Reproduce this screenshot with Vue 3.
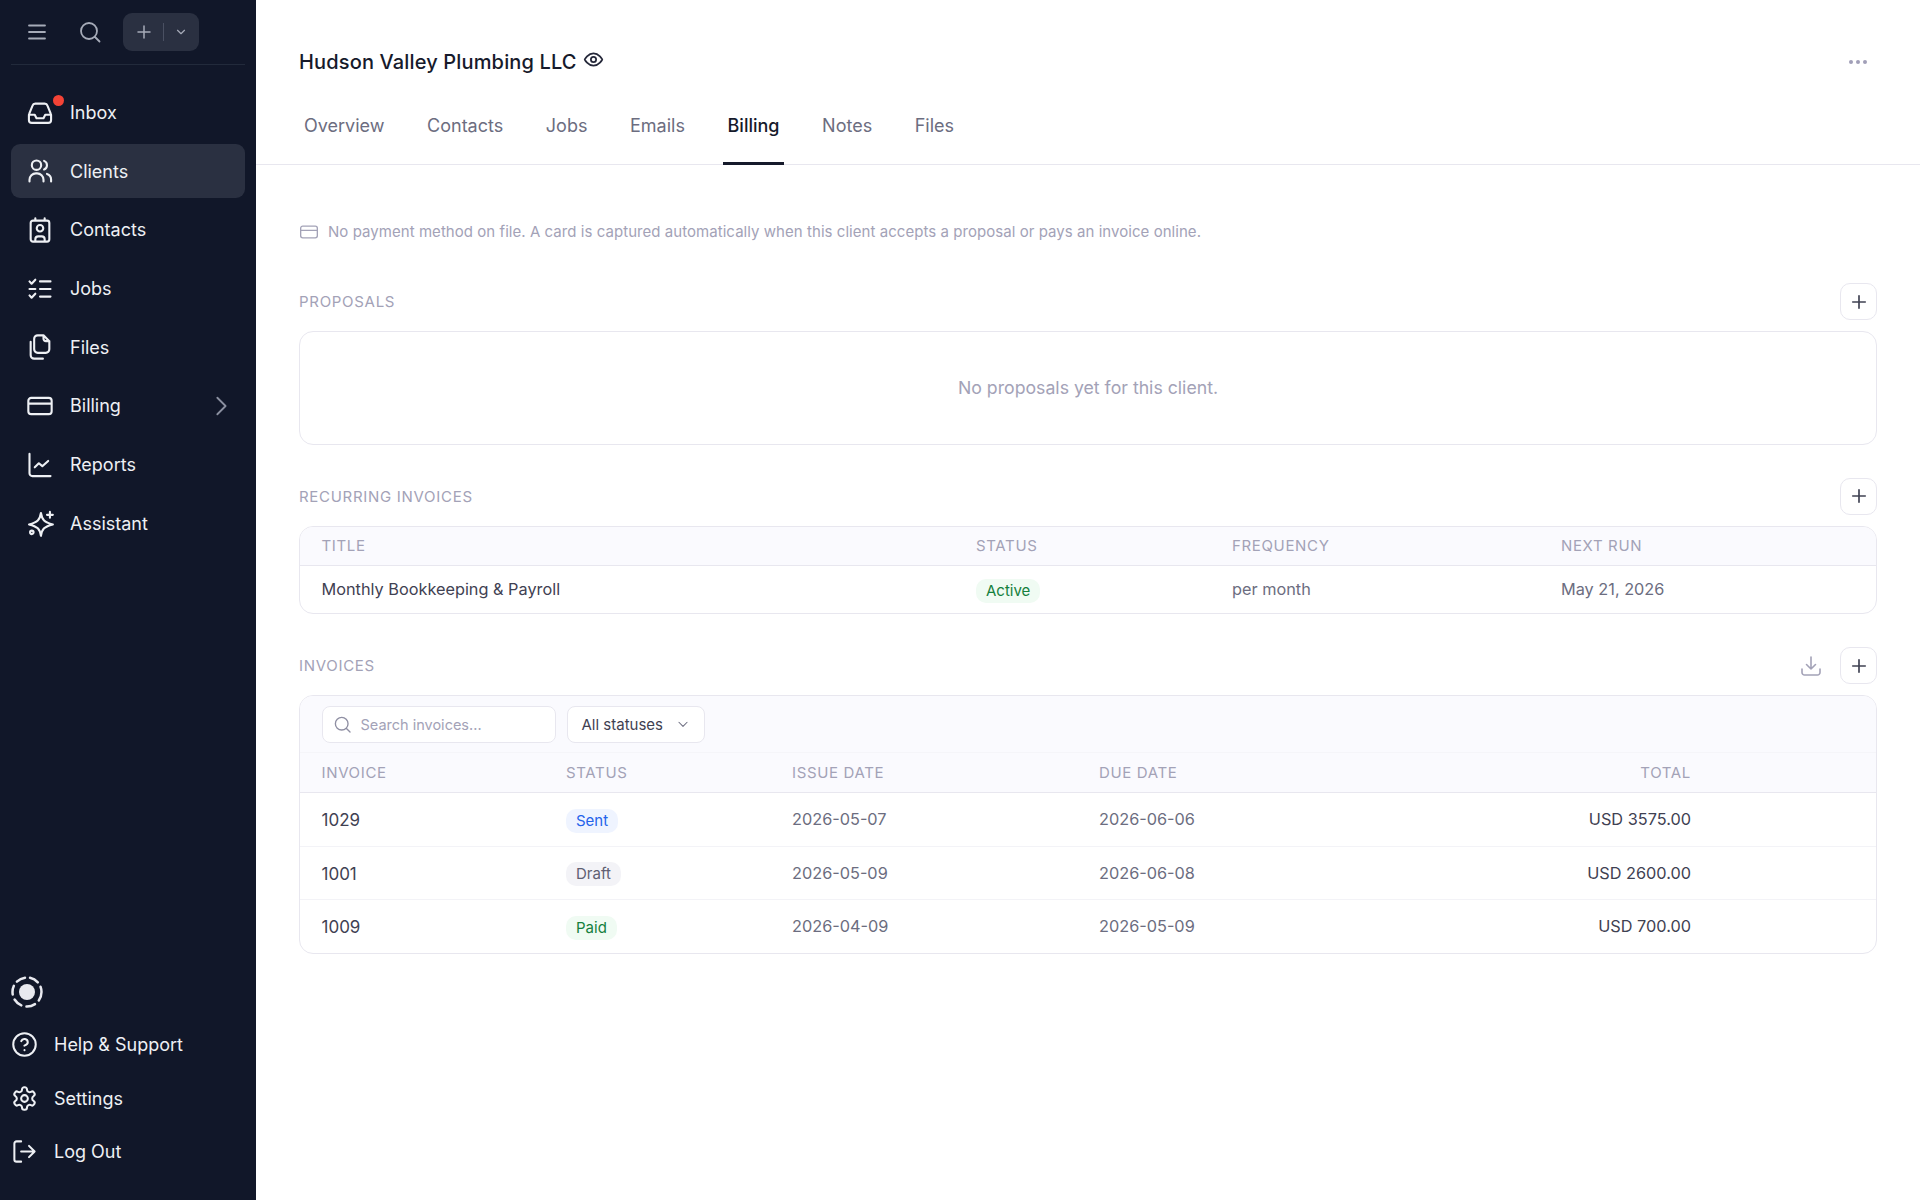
<script setup>
const navItems = [
  { label: "Inbox", dot: true, d: "M2.5 13.5h5l1.5 3h6l1.5-3h5M5.6 5.7 2.9 12.4a3 3 0 0 0-.4 1.4V18a2.5 2.5 0 0 0 2.5 2.5h14a2.5 2.5 0 0 0 2.5-2.5v-4.2a3 3 0 0 0-.4-1.4l-2.7-6.7A2.5 2.5 0 0 0 16 4H8a2.5 2.5 0 0 0-2.4 1.7z" },
  { label: "Clients", active: true, d: "M3 21v-1.5A5.5 5.5 0 0 1 8.5 14h1a5.5 5.5 0 0 1 5.5 5.5V21M5 7a4 4 0 1 0 8 0 4 4 0 1 0-8 0M15.5 3.3a4 4 0 0 1 0 7.4M18 14.5a5 5 0 0 1 3.5 4.8V21" },
  { label: "Contacts", d: "M6 4h12a2 2 0 0 1 2 2v14a2 2 0 0 1-2 2H6a2 2 0 0 1-2-2V6a2 2 0 0 1 2-2zM8 2v2M16 2v2M9.2 10.5a2.8 2.8 0 1 0 5.6 0 2.8 2.8 0 1 0-5.6 0M8 22v-2a2.5 2.5 0 0 1 2.5-2.5h3A2.5 2.5 0 0 1 16 20v2" },
  { label: "Jobs", d: "M3 5.5 4.8 7.5 8 4M3 17.5 4.8 19.5 8 16M12 5.5h9M12 12h9M3 12h5M12 18.5h9" },
  { label: "Files", d: "M10 2h5l5 5v7a3 3 0 0 1-3 3h-7a3 3 0 0 1-3-3V5a3 3 0 0 1 3-3zM15 2v3a2 2 0 0 0 2 2h3M4 7.5V19a3 3 0 0 0 3 3h7.5" },
  { label: "Billing", chevron: true, d: "M4.5 5h15A2.5 2.5 0 0 1 22 7.5v9a2.5 2.5 0 0 1-2.5 2.5h-15A2.5 2.5 0 0 1 2 16.5v-9A2.5 2.5 0 0 1 4.5 5zM2 10h20" },
  { label: "Reports", d: "M3 2.5V19a2.5 2.5 0 0 0 2.5 2.5H21M7.5 14l3.5-3.5 3 2.5 5-4.5" },
  { label: "Assistant", d: "M12.8 3.4c.9 5.8 2.9 8 10.2 9.8-7.3 1.8-9.3 4-10.2 9.8-.9-5.8-2.9-8-10.2-9.8 7.3-1.8 9.3-4 10.2-9.8zM20.5 2.5v5M18 5h5M3.5 20a1.5 1.5 0 1 0 3 0 1.5 1.5 0 1 0-3 0" },
];

const footItems = [
  { label: "Help & Support", d: "M2 12a10 10 0 1 0 20 0 10 10 0 1 0-20 0M9.1 9a3 3 0 0 1 5.8 1c0 2-3 3-3 3M12 17h.01" },
  { label: "Settings", d: "M12.22 2h-.44a2 2 0 0 0-2 2v.18a2 2 0 0 1-1 1.73l-.43.25a2 2 0 0 1-2 0l-.15-.08a2 2 0 0 0-2.73.73l-.22.38a2 2 0 0 0 .73 2.73l.15.1a2 2 0 0 1 1 1.72v.51a2 2 0 0 1-1 1.74l-.15.09a2 2 0 0 0-.73 2.73l.22.38a2 2 0 0 0 2.73.73l.15-.08a2 2 0 0 1 2 0l.43.25a2 2 0 0 1 1 1.73V20a2 2 0 0 0 2 2h.44a2 2 0 0 0 2-2v-.18a2 2 0 0 1 1-1.73l.43-.25a2 2 0 0 1 2 0l.15.08a2 2 0 0 0 2.73-.73l.22-.39a2 2 0 0 0-.73-2.73l-.15-.08a2 2 0 0 1-1-1.74v-.5a2 2 0 0 1 1-1.74l.15-.09a2 2 0 0 0 .73-2.73l-.22-.38a2 2 0 0 0-2.73-.73l-.15.08a2 2 0 0 1-2 0l-.43-.25a2 2 0 0 1-1-1.73V4a2 2 0 0 0-2-2zM9 12a3 3 0 1 0 6 0 3 3 0 1 0-6 0" },
  { label: "Log Out", d: "M9 3H5a2 2 0 0 0-2 2v14a2 2 0 0 0 2 2h4M9 12h12M16 7l5 5-5 5" },
];

const tabs = ["Overview", "Contacts", "Jobs", "Emails", "Billing", "Notes", "Files"];

const invoices = [
  { id: "1029", status: "Sent", issued: "2026-05-07", due: "2026-06-06", total: "USD 3575.00" },
  { id: "1001", status: "Draft", issued: "2026-05-09", due: "2026-06-08", total: "USD 2600.00" },
  { id: "1009", status: "Paid", issued: "2026-04-09", due: "2026-05-09", total: "USD 700.00" },
];
</script>

<template>
  <div class="app">
    <aside class="sidebar">
      <div class="topbar">
        <svg class="top-icon menu" viewBox="0 0 24 24"><path d="M4 5.5h16M4 12h16M4 18.5h16" /></svg>
        <svg class="top-icon search" viewBox="0 0 24 24"><path d="M3 11a8 8 0 1 0 16 0 8 8 0 1 0-16 0M17 17l4.5 4.5" /></svg>
        <div class="quick-add">
          <svg class="plus" viewBox="0 0 24 24"><path d="M12 4v16M4 12h16" /></svg>
          <span class="sep"></span>
          <svg class="caret" viewBox="0 0 24 24"><path d="M6 9l6 6 6-6" /></svg>
        </div>
      </div>

      <nav class="nav">
        <div v-for="item in navItems" :key="item.label" class="nav-item" :class="{ active: item.active }">
          <span class="nav-icon">
            <svg viewBox="0 0 24 24"><path :d="item.d" /></svg>
            <span v-if="item.dot" class="dot"></span>
          </span>
          <span>{{ item.label }}</span>
          <svg v-if="item.chevron" class="chevron" viewBox="0 0 24 24"><path d="M8 3l9 9-9 9" /></svg>
        </div>
      </nav>

      <div class="foot">
        <svg class="status-ring" viewBox="0 0 32 32">
          <circle class="ring" cx="16" cy="16" r="14.5" />
          <circle class="core" cx="16" cy="16" r="8" />
        </svg>
        <div v-for="item in footItems" :key="item.label" class="foot-item">
          <svg viewBox="0 0 24 24"><path :d="item.d" /></svg>
          <span>{{ item.label }}</span>
        </div>
      </div>
    </aside>

    <main class="main">
      <header class="head">
        <div class="title-row">
          <h1>Hudson Valley Plumbing LLC</h1>
          <svg class="eye" viewBox="0 0 24 24"><path d="M2 12s3.6-7 10-7 10 7 10 7-3.6 7-10 7-10-7-10-7zM9 12a3 3 0 1 0 6 0 3 3 0 1 0-6 0" /></svg>
          <span class="more"><i></i><i></i><i></i></span>
        </div>
        <div class="tabs">
          <span v-for="tab in tabs" :key="tab" class="tab" :class="{ current: tab === 'Billing' }">{{ tab }}</span>
        </div>
      </header>

      <div class="content">
        <p class="notice">
          <svg viewBox="0 0 24 24"><path d="M4.5 5h15A2.5 2.5 0 0 1 22 7.5v9a2.5 2.5 0 0 1-2.5 2.5h-15A2.5 2.5 0 0 1 2 16.5v-9A2.5 2.5 0 0 1 4.5 5zM2 10h20" /></svg>
          No payment method on file. A card is captured automatically when this client accepts a proposal or pays an invoice online.
        </p>

        <section class="first">
          <div class="section-head">
            <h2>Proposals</h2>
            <button class="add"><svg viewBox="0 0 24 24"><path d="M12 4.5v15M4.5 12h15" /></svg></button>
          </div>
          <div class="card empty">No proposals yet for this client.</div>
        </section>

        <section>
          <div class="section-head">
            <h2>Recurring invoices</h2>
            <button class="add"><svg viewBox="0 0 24 24"><path d="M12 4.5v15M4.5 12h15" /></svg></button>
          </div>
          <div class="card">
            <div class="rec-row th">
              <span>Title</span><span>Status</span><span>Frequency</span><span>Next run</span>
            </div>
            <div class="rec-row td">
              <span class="strong">Monthly Bookkeeping &amp; Payroll</span>
              <span><em class="badge paid">Active</em></span>
              <span>per month</span>
              <span>May 21, 2026</span>
            </div>
          </div>
        </section>

        <section>
          <div class="section-head">
            <h2>Invoices</h2>
            <svg class="download" viewBox="0 0 24 24"><path d="M12 3v12M7.5 10.5 12 15l4.5-4.5M3 15v3.5A2.5 2.5 0 0 0 5.5 21h13a2.5 2.5 0 0 0 2.5-2.5V15" /></svg>
            <button class="add"><svg viewBox="0 0 24 24"><path d="M12 4.5v15M4.5 12h15" /></svg></button>
          </div>
          <div class="card">
            <div class="toolbar">
              <div class="search-box">
                <svg viewBox="0 0 24 24"><path d="M3 11a8 8 0 1 0 16 0 8 8 0 1 0-16 0M17 17l4.5 4.5" /></svg>
                <span>Search invoices...</span>
              </div>
              <div class="select">
                <span>All statuses</span>
                <svg viewBox="0 0 24 24"><path d="M5 9l7 7 7-7" /></svg>
              </div>
            </div>
            <div class="inv-row th">
              <span>Invoice</span><span>Status</span><span>Issue date</span><span>Due date</span><span class="right">Total</span>
            </div>
            <div v-for="inv in invoices" :key="inv.id" class="inv-row td">
              <span class="strong num">{{ inv.id }}</span>
              <span><em class="badge" :class="inv.status.toLowerCase()">{{ inv.status }}</em></span>
              <span>{{ inv.issued }}</span>
              <span>{{ inv.due }}</span>
              <span class="right strong">{{ inv.total }}</span>
            </div>
          </div>
        </section>
      </div>
    </main>
  </div>
</template>

<style scoped>
.app {
  display: flex;
  min-height: 100vh;
  font-family: "Inter", "Liberation Sans", sans-serif;
  color: #3f4152;
}
svg {
  fill: none;
  stroke: currentColor;
  stroke-width: 2;
  stroke-linecap: round;
  stroke-linejoin: round;
  flex: none;
  display: block;
}

/* sidebar */
.sidebar {
  width: 256px;
  flex: none;
  height: 1200px;
  background: #111729;
  display: flex;
  flex-direction: column;
  padding: 0 11px;
  box-sizing: border-box;
  color: #eef0f4;
}
.topbar {
  height: 64px;
  display: flex;
  align-items: center;
  border-bottom: 1px solid #222a3b;
  padding-left: 14px;
}
.top-icon {
  width: 24px;
  height: 24px;
  color: #a6abb8;
  stroke-width: 1.8;
}
.search {
  margin-left: 29px;
}
.quick-add {
  margin-left: 21px;
  width: 76px;
  height: 38px;
  border-radius: 9px;
  background: #2a3041;
  display: flex;
  align-items: center;
  box-sizing: border-box;
  padding-left: 12px;
  color: #a6abb8;
}
.plus {
  width: 18px;
  height: 18px;
}
.sep {
  width: 1px;
  height: 18px;
  background: #4a5062;
  margin: 0 10px;
}
.caret {
  width: 14px;
  height: 14px;
}
.nav {
  margin-top: 20.5px;
  display: flex;
  flex-direction: column;
  gap: 4.7px;
}
.nav-item {
  height: 54px;
  border-radius: 9px;
  display: flex;
  align-items: center;
  padding-left: 15px;
  gap: 16px;
  font-size: 18px;
  font-weight: 400;
}
.nav-item.active {
  background: #2a3041;
}
.nav-icon {
  position: relative;
  width: 28px;
  height: 28px;
}
.nav-icon svg {
  width: 28px;
  height: 28px;
  stroke-width: 1.8;
}
.dot {
  position: absolute;
  top: -4px;
  left: 27px;
  width: 11px;
  height: 11px;
  border-radius: 50%;
  background: #f44336;
}
.chevron {
  width: 22px;
  height: 22px;
  margin-left: auto;
  margin-right: 13px;
  color: #8b90a0;
}
.foot {
  margin-top: auto;
  padding-bottom: 22px;
  display: flex;
  flex-direction: column;
}
.status-ring {
  width: 32px;
  height: 32px;
  margin-bottom: 10px;
}
.ring {
  stroke: #e8e9ef;
  stroke-width: 2.5;
  stroke-dasharray: 9 5.2;
}
.core {
  fill: #e8e9ef;
  stroke: none;
}
.foot-item {
  height: 53.3px;
  display: flex;
  align-items: center;
  gap: 16px;
  font-size: 18px;
  font-weight: 400;
}
.foot-item svg {
  width: 27px;
  height: 27px;
  stroke-width: 1.8;
}

/* main */
.main {
  flex: 1;
  min-width: 0;
  background: #fff;
}
.head {
  border-bottom: 1px solid #e8e7ef;
}
.title-row {
  display: flex;
  align-items: center;
  height: 40px;
  padding: 42px 43px 0;
}
h1 {
  margin: 0;
  font-size: 20px;
  font-weight: 500;
  letter-spacing: 0.15px;
  color: #161a2b;
}
.eye {
  width: 21px;
  height: 21px;
  margin: -6px 0 0 6px;
  color: #25283a;
}
.more {
  margin-left: auto;
  margin-right: 10px;
  display: flex;
  gap: 3px;
}
.more i {
  width: 4px;
  height: 4px;
  border-radius: 50%;
  background: #a19fb8;
}
.tabs {
  display: flex;
  gap: 32.6px;
  height: 78px;
  margin-top: 4px;
  padding-left: 43px;
}
.tab {
  display: flex;
  align-items: center;
  padding: 0 5px;
  font-size: 18px;
  color: #6c6d80;
  position: relative;
}
.tab.current {
  color: #161a2b;
  font-weight: 500;
}
.tab.current::after {
  content: "";
  position: absolute;
  left: 0;
  right: 0;
  bottom: -1px;
  height: 3px;
  background: #161a2b;
}
.content {
  padding: 0 43px;
}
.notice {
  margin: 56px 0 0;
  height: 21px;
  display: flex;
  align-items: center;
  gap: 11px;
  font-size: 15px;
  letter-spacing: 0.05px;
  color: #a3a2b7;
}
.notice svg {
  width: 20px;
  height: 20px;
  margin-right: -2px;
  stroke-width: 1.6;
}
section {
  margin-top: 33px;
}
section.first {
  margin-top: 41px;
}
.section-head {
  display: flex;
  align-items: center;
  height: 37px;
  margin-bottom: 11px;
}
h2 {
  margin: 0 auto 0 0;
  font-size: 15px;
  font-weight: 400;
  letter-spacing: 0.7px;
  text-transform: uppercase;
  color: #a3a2b7;
}
.add {
  width: 37px;
  height: 37px;
  padding: 0;
  background: #fff;
  border: 1px solid #e8e7ef;
  border-radius: 10px;
  display: flex;
  align-items: center;
  justify-content: center;
  color: #3f4152;
}
.add svg {
  width: 20px;
  height: 20px;
}
.download {
  width: 24px;
  height: 24px;
  margin-right: 17px;
  stroke-width: 1.6;
  color: #a3a2b7;
}
.card {
  border: 1px solid #e8e7ef;
  border-radius: 14px;
  overflow: hidden;
}
.empty {
  height: 111.5px;
  display: flex;
  align-items: center;
  justify-content: center;
  font-size: 17.7px;
  color: #a3a2b7;
}
.th {
  background: #fafafe;
  height: 38px;
  border-bottom: 1px solid #e8e7ef;
  font-size: 15px;
  font-weight: 400;
  letter-spacing: 0.65px;
  text-transform: uppercase;
  color: #a3a2b7;
}
.td {
  font-size: 16.3px;
  color: #6c6d80;
}
.strong {
  color: #3f4152;
}
.num {
  font-size: 17px;
  padding-top: 2px;
}
.rec-row {
  display: grid;
  grid-template-columns: 654.5px 256px 329px 1fr;
  align-items: center;
  padding-left: 21.5px;
}
.rec-row.td {
  height: 47.5px;
}
.inv-row {
  display: grid;
  grid-template-columns: 244.5px 226px 307px 1fr 200px;
  align-items: center;
  padding: 0 185px 0 21.5px;
}
.inv-row.th {
  height: 39px;
}
.inv-row.td {
  height: 52.6px;
  border-bottom: 1px solid #f3f3f7;
}
.inv-row.td:last-child {
  border-bottom: 0;
}
.right {
  text-align: right;
}
.badge {
  display: inline-block;
  height: 24px;
  line-height: 24px;
  margin-top: 3px;
  padding: 0 10px;
  border-radius: 10px;
  font-size: 15px;
  font-style: normal;
  font-weight: 400;
  vertical-align: middle;
}
.paid {
  background: #f0fbf3;
  color: #15803d;
}
.sent {
  background: #eff4ff;
  color: #2563eb;
}
.draft {
  background: #f3f3f7;
  color: #5f6072;
}
.toolbar {
  background: #fafafe;
  height: 57px;
  box-sizing: border-box;
  display: flex;
  align-items: center;
  gap: 11px;
  padding-left: 21.5px;
  border-bottom: 1px solid #f5f5f9;
}
.search-box,
.select {
  height: 37px;
  box-sizing: border-box;
  background: #fff;
  border: 1px solid #e8e7ef;
  border-radius: 8px;
  display: flex;
  align-items: center;
  font-size: 15px;
}
.search-box {
  width: 234px;
  padding-left: 10px;
  gap: 9px;
  font-size: 14.5px;
  color: #a3a2b7;
}
.search-box svg {
  width: 19px;
  height: 19px;
  stroke-width: 1.7;
  color: #8f8fa3;
}
.select {
  width: 138px;
  padding: 0 14px;
  justify-content: space-between;
  color: #3f4152;
}
.select svg {
  width: 14px;
  height: 14px;
  stroke-width: 1.8;
  color: #6c6d80;
}
</style>

<style>
html,
body {
  margin: 0;
  background: #fff;
}
</style>
